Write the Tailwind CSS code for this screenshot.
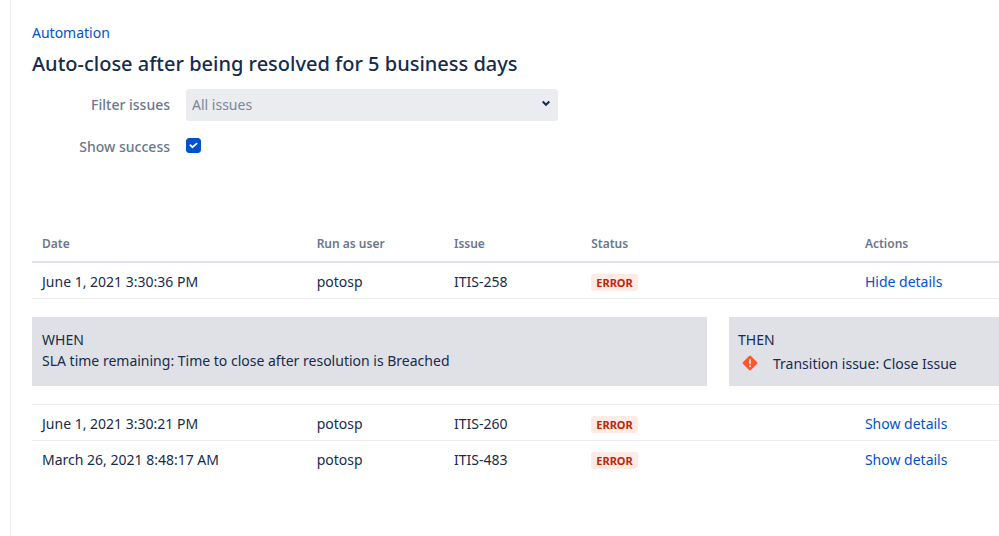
<!DOCTYPE html>
<html lang="en">
<head>
  <meta charset="UTF-8" />
  <meta name="viewport" content="width=device-width, initial-scale=1.0"/>
  <title>Automation - Auto-close after being resolved for 5 business days</title>
  <script src="https://cdn.jsdelivr.net/npm/@tailwindcss/browser@4"></script>
</head>

<body class="bg-white text-[#172b4d] font-['Noto_Sans','Open_Sans',sans-serif] text-[14px] leading-5">

  <main class="ml-[10px] min-h-screen border-l border-[#ebecf0] pl-[21px] pt-[23px] overflow-hidden">

    <!-- Header -->
    <header>
      <a href="#" class="text-[#0052cc] hover:underline">Automation</a>
      <h1 class="mt-[9px] text-[20px] leading-6 font-medium">Auto-close after being resolved for 5 business days</h1>
    </header>

    <!-- Filters -->
    <form class="mt-[13px]">
      <div class="flex items-center">
        <label for="filter" class="w-[138px] text-right font-medium text-[#6b778c]">Filter issues</label>
        <div class="relative ml-4 w-[372px]">
          <select id="filter" class="block h-8 w-full appearance-none rounded-[3px] bg-[#ebecf0] px-[6px] text-[#7a869a]">
            <option>All issues</option>
          </select>
          <svg class="pointer-events-none absolute right-2 top-[11px] h-2 w-2" viewBox="0 0 8 8" fill="none" stroke="#172b4d" stroke-width="2"><path d="M0.7 1.5 4 4.8 7.3 1.5"/></svg>
        </div>
      </div>
      <div class="mt-4 flex items-start">
        <label for="success" class="w-[138px] text-right font-medium text-[#6b778c]">Show success</label>
        <div class="relative ml-4 mt-px h-[15px] w-[15px]">
          <input id="success" type="checkbox" checked class="peer block h-[15px] w-[15px] appearance-none rounded-[3px] border border-[#dfe1e6] checked:border-[#0052cc] checked:bg-[#0052cc]" />
          <svg class="pointer-events-none absolute inset-0 hidden h-[15px] w-[15px] peer-checked:block" viewBox="0 0 15 15" fill="none" stroke="#fff" stroke-width="1.8" stroke-linecap="round" stroke-linejoin="round"><path d="M4.4 7.3 6.6 9.2 10.6 5.6"/></svg>
        </div>
      </div>
    </form>

    <!-- Audit log -->
    <table class="mt-[67px] w-full table-fixed border-collapse text-left">
      <colgroup>
        <col class="w-[28.4%]" />
        <col class="w-[14.2%]" />
        <col class="w-[14.2%]" />
        <col class="w-[28.3%]" />
        <col />
      </colgroup>
      <thead>
        <tr class="h-[38px] border-b-2 border-[#dfe1e6] text-[12px] text-[#6b778c]">
          <th class="px-[10px] pt-[2px] font-semibold">Date</th>
          <th class="px-[10px] pt-[2px] font-semibold">Run as user</th>
          <th class="px-[10px] pt-[2px] font-semibold">Issue</th>
          <th class="px-[10px] pt-[2px] font-semibold">Status</th>
          <th class="px-[10px] pt-[2px] font-semibold">Actions</th>
        </tr>
      </thead>
      <tbody>
        <tr class="h-9 border-b border-[#ebecf0]">
          <td class="px-[10px] pt-[3px]">June 1, 2021 3:30:36 PM</td>
          <td class="px-[10px] pt-[3px]">potosp</td>
          <td class="px-[10px] pt-[3px]">ITIS-258</td>
          <td class="px-[10px] pt-[3px]"><span class="inline-block rounded-[3px] bg-[#ffebe6] px-[5px] text-[11px] leading-[17px] font-bold text-[#bf2600]">ERROR</span></td>
          <td class="px-[10px] pt-[3px]"><a href="#" class="text-[#0052cc] hover:underline">Hide details</a></td>
        </tr>
        <tr class="border-b border-[#ebecf0]">
          <td colspan="5" class="py-[18px]">
            <div class="grid grid-cols-[5fr_2fr] gap-[22px]">
              <div class="bg-[#dfe1e6] px-[10px] pt-3 pb-[15px] leading-[21px]">
                <h2>WHEN</h2>
                <p>SLA time remaining: Time to close after resolution is Breached</p>
              </div>
              <div class="bg-[#dfe1e6] px-[9px] pt-3 pb-3 leading-[21px]">
                <h2>THEN</h2>
                <p class="mt-[3px] flex items-center whitespace-nowrap">
                  <svg class="ml-1 mr-[15px] h-4 w-4 shrink-0" viewBox="0 0 16 16"><rect x="2.4" y="2.4" width="11.2" height="11.2" rx="1.4" fill="#ff5630" transform="rotate(45 8 8)"/><path d="M8 4.6V8.4" stroke="#dfe1e6" stroke-width="1.8" stroke-linecap="round"/><circle cx="8" cy="11.2" r="1" fill="#dfe1e6"/></svg>
                  Transition issue: Close Issue
                </p>
              </div>
            </div>
          </td>
        </tr>
        <tr class="h-9 border-b border-[#ebecf0]">
          <td class="px-[10px] pt-[3px]">June 1, 2021 3:30:21 PM</td>
          <td class="px-[10px] pt-[3px]">potosp</td>
          <td class="px-[10px] pt-[3px]">ITIS-260</td>
          <td class="px-[10px] pt-[3px]"><span class="inline-block rounded-[3px] bg-[#ffebe6] px-[5px] text-[11px] leading-[17px] font-bold text-[#bf2600]">ERROR</span></td>
          <td class="px-[10px] pt-[3px]"><a href="#" class="text-[#0052cc] hover:underline">Show details</a></td>
        </tr>
        <tr class="h-9">
          <td class="px-[10px] pt-[3px]">March 26, 2021 8:48:17 AM</td>
          <td class="px-[10px] pt-[3px]">potosp</td>
          <td class="px-[10px] pt-[3px]">ITIS-483</td>
          <td class="px-[10px] pt-[3px]"><span class="inline-block rounded-[3px] bg-[#ffebe6] px-[5px] text-[11px] leading-[17px] font-bold text-[#bf2600]">ERROR</span></td>
          <td class="px-[10px] pt-[3px]"><a href="#" class="text-[#0052cc] hover:underline">Show details</a></td>
        </tr>
      </tbody>
    </table>
  </main>

</body>
</html>
